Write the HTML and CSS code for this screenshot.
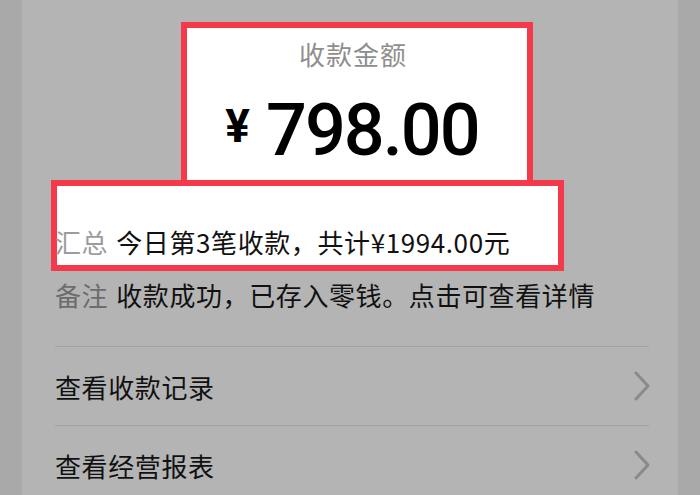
FILE: index.html
```html
<!DOCTYPE html>
<html lang="zh-CN">
<head>
  <meta charset="UTF-8" />
  <meta name="viewport" content="width=device-width, initial-scale=1.0" />
  <title>收款到账通知</title>
  <link rel="stylesheet" href="styles.css">
</head>
<body>
  <div class="card">
    <!-- amount, highlighted -->
    <div class="amount-box">
      <div class="amount-label">收款金额</div>
      <div class="amount"><span class="currency">¥</span><span class="num">798.00</span></div>
    </div>

    <div class="summary-box">
      <div class="row"><span class="label">汇总</span><span class="value">今日第3笔收款，共计¥1994.00元</span></div>
    </div>
    <div class="row note"><span class="label">备注</span><span class="value">收款成功，已存入零钱。点击可查看详情</span></div>

    <div class="menu">
      <div class="menu-item">
        <span>查看收款记录</span>
        <svg class="chevron" width="18" height="30" viewBox="0 0 18 30"><path d="M3 2 L15 15 L3 28" /></svg>
      </div>
      <div class="menu-item">
        <span>查看经营报表</span>
        <svg class="chevron" width="18" height="30" viewBox="0 0 18 30"><path d="M3 2 L15 15 L3 28" /></svg>
      </div>
    </div>
  </div>
</body>
</html>
```

FILE: styles.css
```css
html, body { margin: 0; padding: 0; }
body {
  background: #a9a9a9;
  font-family: "Noto Sans CJK SC", "Noto Sans", sans-serif;
  height: 495px;
  overflow: hidden;
}
.card {
  margin: 0 22px;
  height: 495px;
  background: #b4b4b4;
  padding: 22px 29px 0 33px;
  box-sizing: border-box;
}
/* red highlight frames */
.amount-box {
  width: 352px;
  height: 164px;
  box-sizing: border-box;
  margin-left: 126px;
  background: #fff;
  border: 6px solid #f43a4a;
  text-align: center;
}
.amount-label {
  padding-top: 8px;
  font-size: 26px;
  letter-spacing: 1px;
  line-height: 36px;
  color: #8e8e8e;
  padding-right: 8px;
}
.amount {
  margin-top: 14px;
  line-height: 80px;
  color: #000;
  font-family: Roboto, "Liberation Sans", sans-serif;
  padding-right: 10px;
}
.currency {
  font-size: 46px;
  font-weight: 700;
  vertical-align: 13px;
  margin-right: 16px;
}
.num {
  font-size: 72px;
  font-weight: 500;
  letter-spacing: -2px;
}
.summary-box {
  width: 513px;
  height: 91px;
  box-sizing: border-box;
  margin: -6px 0 0 -4px;
  background: #fff;
  border: 6px solid #f43a4a;
  padding: 38px 0 0 0;
}
.summary-box .row { margin-left: -2px; }
.row {
  display: flex;
  gap: 8px;
  font-size: 26px;
  letter-spacing: 0.6px;
  line-height: 36px;
  color: #111;
}
.summary-box .label { color: #9c9c9c; }
.note { margin-top: 6px; }
.note .label { color: #6c6c6c; }
.menu {
  margin-top: 33px;
  border-top: 1px solid #a0a0a0;
}
.menu-item {
  height: 78px;
  display: flex;
  align-items: center;
  justify-content: space-between;
  font-size: 26px;
  letter-spacing: 0.6px;
  color: #111;
  border-bottom: 1px solid #a0a0a0;
}
.menu-item:last-child { border-bottom: none; }
.chevron { margin-right: -2px; }
.chevron path {
  fill: none;
  stroke: #8a8a8a;
  stroke-width: 3;
  stroke-linecap: round;
  stroke-linejoin: round;
}
```
